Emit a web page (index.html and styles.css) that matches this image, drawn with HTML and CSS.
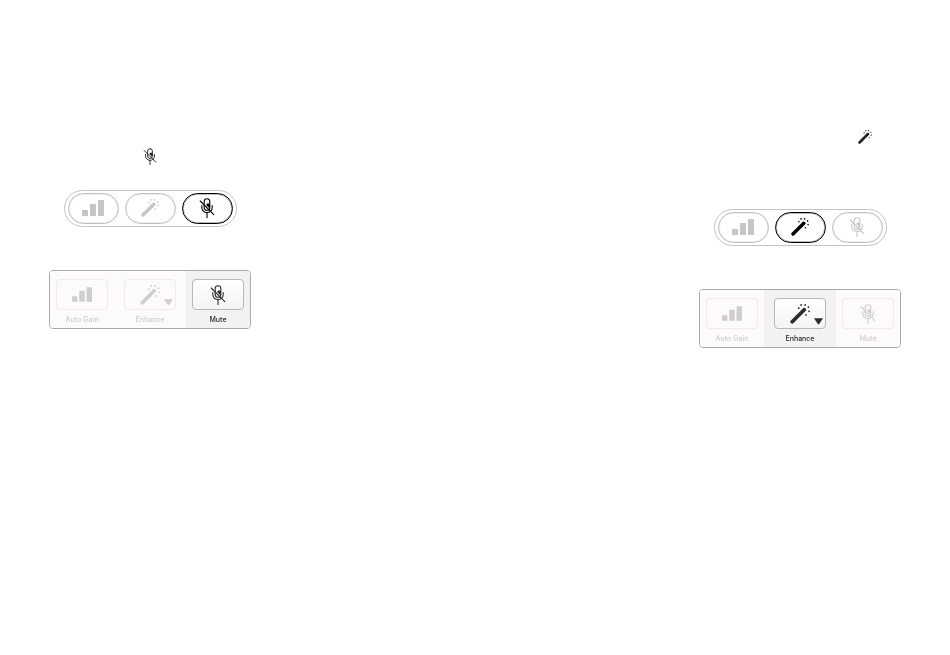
FILE: index.html
```html
<!DOCTYPE html>
<html lang="en">
<head>
  <meta charset="UTF-8">
  <meta name="viewport" content="width=device-width, initial-scale=1.0">
  <title>Mute and Enhance</title>
  <link rel="stylesheet" href="styles.css">
</head>
<body>
  <svg class="sprite" aria-hidden="true">
    <symbol id="bars" viewBox="0 0 22 16">
      <rect x="0" y="10" width="6" height="6" rx="0.6" fill="currentColor"/>
      <rect x="8" y="4" width="6" height="12" rx="0.6" fill="currentColor"/>
      <rect x="16" y="0" width="6" height="16" rx="0.6" fill="currentColor"/>
    </symbol>
    <symbol id="wand" viewBox="0 0 18 18">
      <path d="M2 16 L12.8 5.2" stroke="currentColor" stroke-width="3.4" stroke-linecap="round"/>
      <path class="tip" d="M11.2 6.8 L12.8 5.2" stroke-width="1.3" stroke-linecap="round"/>
      <g fill="currentColor">
        <circle cx="7.9" cy="3.8" r="0.8"/>
        <circle cx="10" cy="0.9" r="0.8"/>
        <circle cx="13.6" cy="0.9" r="0.8"/>
        <circle cx="16.6" cy="2.9" r="0.8"/>
        <circle cx="17.1" cy="6.6" r="0.8"/>
        <circle cx="14.4" cy="9.8" r="0.8"/>
      </g>
    </symbol>
    <symbol id="mic-off" viewBox="0 0 16 20">
      <g fill="none" stroke="currentColor" stroke-width="1.1" stroke-linecap="round">
        <rect x="5.2" y="0.8" width="5.6" height="11.4" rx="2.8"/>
        <path d="M2.8 7.5 V9.5 A5.2 5 0 0 0 13.2 9.5 V7.5"/>
        <path d="M8 14.5 V19.4"/>
        <path d="M1.2 3 L14.8 16.6"/>
      </g>
      <path d="M8 5.5 H10.8 V10.7 L7.2 7.1 Z" fill="currentColor"/>
    </symbol>
    <symbol id="arrow" viewBox="0 0 9 7">
      <path d="M0 0.3 H9 L5 6.3 H4 Z" fill="currentColor"/>
    </symbol>
  </svg>

  <main class="page">
    <section class="column column-mute">
      <svg class="lead mic" role="img" aria-label="Mute"><use href="#mic-off"/></svg>
      <div class="pill">
        <button type="button" aria-label="Auto Gain"><svg class="bars"><use href="#bars"/></svg></button>
        <button type="button" aria-label="Enhance"><svg class="wand"><use href="#wand"/></svg></button>
        <button type="button" class="active" aria-label="Mute"><svg class="mic"><use href="#mic-off"/></svg></button>
      </div>
      <div class="panel">
        <div class="cell">
          <button type="button" id="gain-1"><svg class="bars"><use href="#bars"/></svg></button>
          <label for="gain-1">Auto Gain</label>
        </div>
        <div class="cell">
          <button type="button" id="enhance-1"><svg class="wand"><use href="#wand"/></svg><svg class="arrow"><use href="#arrow"/></svg></button>
          <label for="enhance-1">Enhance</label>
        </div>
        <div class="cell active">
          <button type="button" id="mute-1"><svg class="mic"><use href="#mic-off"/></svg></button>
          <label for="mute-1">Mute</label>
        </div>
      </div>
    </section>

    <section class="column column-enhance">
      <svg class="lead wand" role="img" aria-label="Enhance"><use href="#wand"/></svg>
      <div class="pill">
        <button type="button" aria-label="Auto Gain"><svg class="bars"><use href="#bars"/></svg></button>
        <button type="button" class="active" aria-label="Enhance"><svg class="wand"><use href="#wand"/></svg></button>
        <button type="button" aria-label="Mute"><svg class="mic"><use href="#mic-off"/></svg></button>
      </div>
      <div class="panel">
        <div class="cell">
          <button type="button" id="gain-2"><svg class="bars"><use href="#bars"/></svg></button>
          <label for="gain-2">Auto Gain</label>
        </div>
        <div class="cell active">
          <button type="button" id="enhance-2"><svg class="wand"><use href="#wand"/></svg><svg class="arrow"><use href="#arrow"/></svg></button>
          <label for="enhance-2">Enhance</label>
        </div>
        <div class="cell">
          <button type="button" id="mute-2"><svg class="mic"><use href="#mic-off"/></svg></button>
          <label for="mute-2">Mute</label>
        </div>
      </div>
    </section>
  </main>
</body>
</html>
```

FILE: styles.css
```css
* {
  box-sizing: border-box;
}
body {
  margin: 0;
  background-color: #fff;
  font-family: Inter, "Open Sans", sans-serif;
}
.sprite {
  display: none;
}
.page {
  display: flex;
  justify-content: space-between;
  padding: 130px 49px;
}
.column {
  display: flex;
  flex-direction: column;
  align-items: center;
}
.column-mute {
  padding-top: 18px;
}
button {
  display: flex;
  align-items: center;
  justify-content: center;
  padding: 0;
  cursor: pointer;
}

/* icons */
.bars {
  width: 22px;
  height: 16px;
}
.wand {
  width: 18px;
  height: 18px;
}
.mic {
  width: 16px;
  height: 20px;
}
.lead {
  color: #222;
}
.lead.mic {
  width: 14px;
  height: 17px;
  margin-bottom: 25px;
}
.lead.wand {
  width: 14px;
  height: 14px;
  align-self: flex-end;
  margin-right: 29px;
  margin-bottom: 65px;
}

/* rounded bar */
.pill {
  display: flex;
  gap: 6px;
  padding: 2px 3px;
  border: 1px solid #c4c4c4;
  border-radius: 19px;
  margin-bottom: 43px;
}
.pill button {
  width: 51px;
  height: 31px;
  padding-bottom: 2px;
  border: 1px solid #c0c0c0;
  border-radius: 16px;
  background-color: #fff;
  box-shadow: inset 0 0 0 1px #eee;
  color: #c6c6c6;
}
.pill .active {
  border-color: #000;
  box-shadow: inset 0 0 0 1px #bbb;
  color: #000;
}

/* panel */
.panel {
  display: grid;
  grid-template-columns: 64px 72px 64px;
  border: 1px solid #aaa;
  border-radius: 4px;
  overflow: hidden;
  will-change: transform;
}
.cell {
  display: flex;
  flex-direction: column;
  align-items: center;
  padding: 8px 0 3px;
  background-color: #fdfafb;
  color: #d0cdcd;
}
.cell button {
  position: relative;
  width: 52px;
  height: 31px;
  border: 1px solid #efebeb;
  border-radius: 4px;
  background-color: transparent;
  color: inherit;
}
.cell label {
  margin-top: 5px;
  font-size: 7px;
  font-weight: 500;
  line-height: 10px;
}
.cell .bars {
  width: 20px;
  height: 15px;
}
.cell .wand {
  width: 20px;
  height: 20px;
}
.cell .arrow {
  position: absolute;
  right: 2px;
  bottom: 3px;
  width: 9px;
  height: 7px;
}
.cell.active {
  background-color: #f2f2f2;
  color: #2b2b2b;
}
.cell.active button {
  border-color: #b8b8b8;
  background-image: linear-gradient(#fff, #f4f4f4);
}
.cell .tip {
  stroke: #fff;
}
```
